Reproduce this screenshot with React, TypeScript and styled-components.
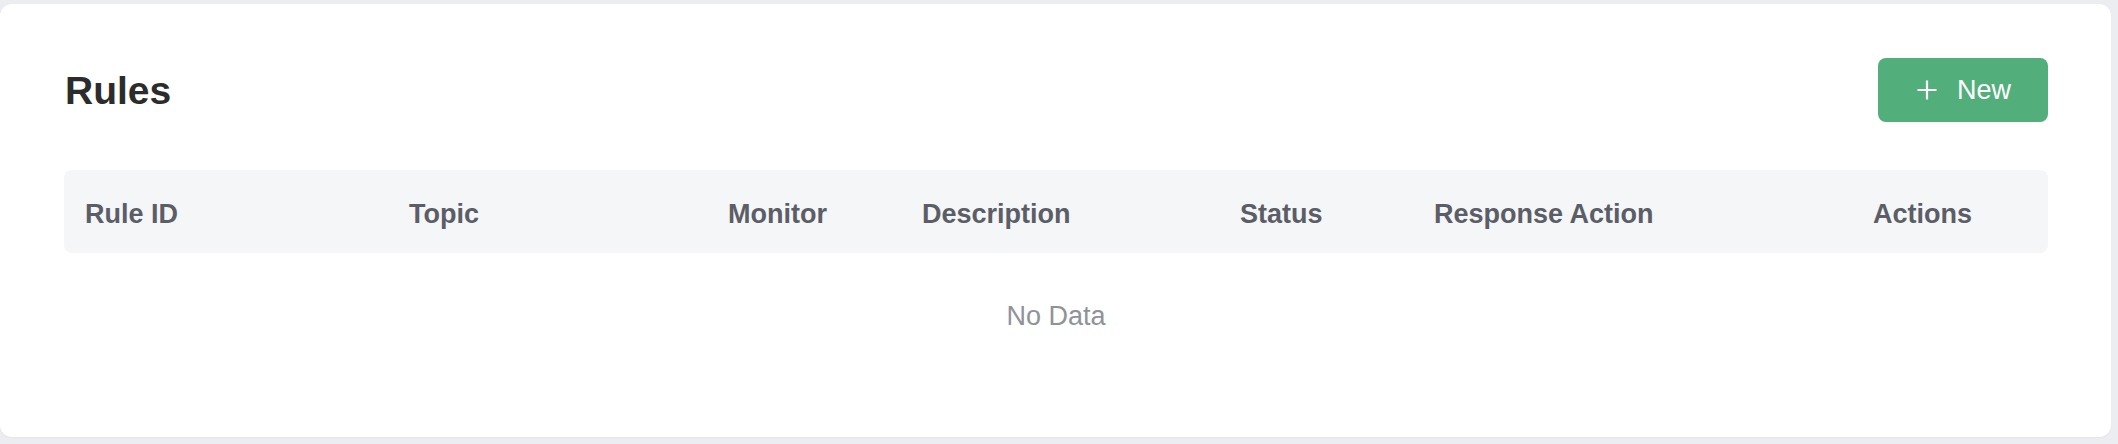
import React from "react";
import styled, { createGlobalStyle } from "styled-components";

const GlobalStyle = createGlobalStyle`
  html, body {
    margin: 0;
    padding: 0;
    background: #ecedf1;
  }
  body {
    font-family: "Liberation Sans", Arial, Helvetica, sans-serif;
  }
`;

const Page = styled.div`
  padding: 4px 7px 7px 0;
`;

const Card = styled.section`
  background: #ffffff;
  border-radius: 12px;
  height: 433px;
  box-sizing: border-box;
  padding: 54px 63px 0 64px;
  box-shadow: 0 1px 2px rgba(0, 0, 0, 0.04);
`;

const TitleRow = styled.div`
  display: flex;
  align-items: center;
  justify-content: space-between;
  height: 64px;
`;

const Title = styled.h1`
  margin: 0 0 0 1px;
  font-size: 39px;
  font-weight: 700;
  color: #2c2c2c;
  line-height: 1;
`;

const NewButton = styled.button`
  display: flex;
  align-items: center;
  justify-content: center;
  gap: 20px;
  width: 170px;
  height: 64px;
  padding: 0 0 0 2px;
  border: none;
  border-radius: 8px;
  background: #52ae7b;
  color: #ffffff;
  font-family: "Liberation Sans", Arial, sans-serif;
  font-size: 27px;
  font-weight: 400;
  cursor: pointer;
`;

const HeaderRow = styled.div`
  margin-top: 48px;
  display: grid;
  grid-template-columns: 324px 319px 194px 318px 194px 439px 1fr;
  align-items: center;
  height: 83px;
  box-sizing: border-box;
  padding-top: 5px;
  background: #f5f6f8;
  border-radius: 8px;
`;

const HeaderCell = styled.div`
  padding-left: 21px;
  font-size: 27px;
  font-weight: 700;
  color: #5b5e66;
  white-space: nowrap;
`;

const Empty = styled.div`
  padding-top: 47px;
  text-align: center;
  font-size: 27px;
  line-height: 32px;
  color: #8f9298;
`;

const PlusIcon = () => (
  <svg width="20" height="20" viewBox="0 0 20 20" fill="none">
    <path d="M10 0.5V19.5M0.5 10H19.5" stroke="#ffffff" strokeWidth="2.2" />
  </svg>
);

const columns = [
  "Rule ID",
  "Topic",
  "Monitor",
  "Description",
  "Status",
  "Response Action",
  "Actions",
];

export default function App() {
  return (
    <>
      <GlobalStyle />
      <Page>
        <Card>
          <TitleRow>
            <Title>Rules</Title>
            <NewButton>
              <PlusIcon />
              <span>New</span>
            </NewButton>
          </TitleRow>
          <HeaderRow>
            {columns.map((c) => (
              <HeaderCell key={c}>{c}</HeaderCell>
            ))}
          </HeaderRow>
          <Empty>No Data</Empty>
        </Card>
      </Page>
    </>
  );
}
